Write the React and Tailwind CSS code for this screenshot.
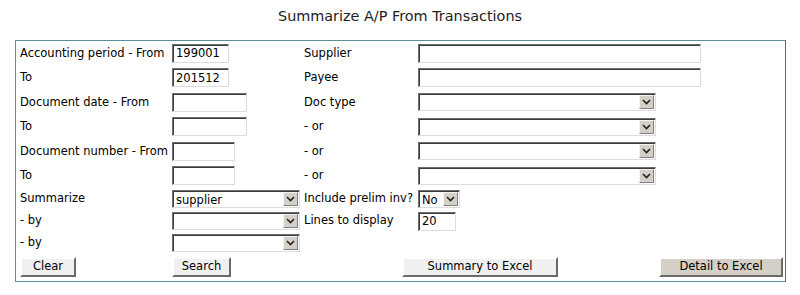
import React from 'react';

const inset =
  'border border-t-[#6e6e6e] border-l-[#6e6e6e] border-b-[#dcdcdc] border-r-[#dcdcdc] shadow-[inset_1px_1px_0_#3c3c3c] bg-white';

function TextBox({ width, value }) {
  return (
    <div className={`${inset} ${width} h-[19px] pl-[3px] pt-[1px] flex items-center text-[11.5px] leading-none text-black`}>
      {value}
    </div>
  );
}

function Select({ width, value }) {
  return (
    <div className={`${inset} ${width} h-[18px] flex items-center justify-between text-[11.5px] leading-none text-black`}>
      <span className="pl-[3px] pt-[3px]">{value}</span>
      <span className="mr-[1px] w-[15px] h-[14px] bg-[#d4d0c8] border border-t-[#f4f4f4] border-l-[#f4f4f4] border-b-[#808080] border-r-[#808080] flex items-center justify-center">
        <svg width="9" height="6" viewBox="0 0 9 6">
          <path d="M1 1 L4.5 4.5 L8 1" fill="none" stroke="#222" strokeWidth="1.6" />
        </svg>
      </span>
    </div>
  );
}

function Button({ width, label, dark }) {
  return (
    <div
      className={`${width} h-[20px] flex items-center justify-center text-[11.5px] text-black border-2 border-t-white border-l-white border-b-[#6a6a6a] border-r-[#6a6a6a] ${
        dark ? 'bg-[#d4d0c8]' : 'bg-[#f0f0f0]'
      }`}
    >
      {label}
    </div>
  );
}

function Row({ h, children }) {
  return (
    <div className={`grid grid-cols-[152px_132px_114px_1fr] items-center whitespace-nowrap ${h}`}>{children}</div>
  );
}

export default function App() {
  return (
    <div className="w-[800px] h-[295px] bg-white font-['DejaVu_Sans',Verdana,sans-serif] text-[11.5px] text-black">
      <h1 className="pt-[6px] h-[40px] text-center text-[14.4px] text-[#222]">Summarize A/P From Transactions</h1>

      <div className="ml-[15px] w-[771px] h-[242px] border border-[#5d8c9c] border-r-[#3f6f80] pl-[4px]">
        <Row h="h-[24.5px]">
          <span>Accounting period - From</span>
          <TextBox width="w-[57px]" value="199001" />
          <span>Supplier</span>
          <TextBox width="w-[283px]" value="" />
        </Row>
        <Row h="h-[24.5px]">
          <span>To</span>
          <TextBox width="w-[57px]" value="201512" />
          <span>Payee</span>
          <TextBox width="w-[283px]" value="" />
        </Row>
        <Row h="h-[24.5px]">
          <span>Document date - From</span>
          <TextBox width="w-[75px]" value="" />
          <span>Doc type</span>
          <Select width="w-[238px]" value="" />
        </Row>
        <Row h="h-[24.5px]">
          <span>To</span>
          <TextBox width="w-[75px]" value="" />
          <span>- or</span>
          <Select width="w-[238px]" value="" />
        </Row>
        <Row h="h-[24.5px]">
          <span>Document number - From</span>
          <TextBox width="w-[63px]" value="" />
          <span>- or</span>
          <Select width="w-[238px]" value="" />
        </Row>
        <Row h="h-[24.5px]">
          <span>To</span>
          <TextBox width="w-[63px]" value="" />
          <span>- or</span>
          <Select width="w-[238px]" value="" />
        </Row>
        <Row h="h-[22px]">
          <span>Summarize</span>
          <Select width="w-[128px]" value="supplier" />
          <span>Include prelim inv?</span>
          <Select width="w-[42px]" value="No" />
        </Row>
        <Row h="h-[22px]">
          <span>- by</span>
          <Select width="w-[128px]" value="" />
          <span>Lines to display</span>
          <TextBox width="w-[38px]" value="20" />
        </Row>
        <Row h="h-[22px]">
          <span>- by</span>
          <Select width="w-[128px]" value="" />
          <span />
          <span />
        </Row>
        <div className="flex items-center h-[25px]">
          <Button width="w-[56px]" label="Clear" />
          <div className="ml-[96px]">
            <Button width="w-[59px]" label="Search" />
          </div>
          <div className="ml-[171px]">
            <Button width="w-[156px]" label="Summary to Excel" />
          </div>
          <div className="ml-[101px]">
            <Button width="w-[124px]" label="Detail to Excel" dark />
          </div>
        </div>
      </div>
    </div>
  );
}
